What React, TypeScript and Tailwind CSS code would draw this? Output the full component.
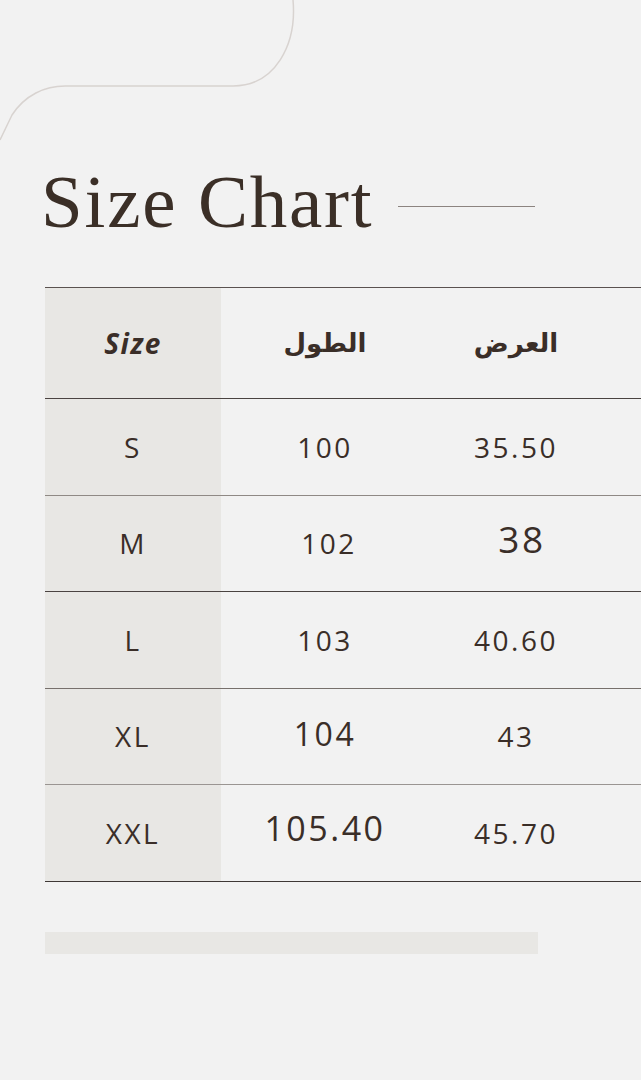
import React from "react";

type Row = {
  size: string;
  length: string;
  width: string;
  lengthCls?: string;
  widthCls?: string;
  line: string;
};

const rows: Row[] = [
  { size: "S", length: "100", width: "35.50", line: "border-[#8f8985]" },
  { size: "M", length: "102", width: "38", lengthCls: "translate-x-[4px]", widthCls: "text-[37px] -translate-y-[5px] translate-x-[6px]", line: "border-[#4a4341]" },
  { size: "L", length: "103", width: "40.60", line: "border-[#77706c]" },
  { size: "XL", length: "104", width: "43", lengthCls: "text-[32px] -translate-y-[2px]", line: "border-[#9a9592]" },
  { size: "XXL", length: "105.40", width: "45.70", lengthCls: "text-[34px] -translate-y-[4px]", line: "border-[#3f3836]" },
];

const sans = "font-['Open_Sans',sans-serif]";
const arabic = "font-['DejaVu_Sans','Noto_Sans',sans-serif]";

function Curve() {
  return (
    <svg className="absolute left-0 top-0" width="320" height="160" viewBox="0 0 320 160" fill="none">
      <path
        d="M293 0 C297 45 275 86 233 86 L65 86 C45 86 25 95 12 115 L0 140"
        stroke="#d8d3d0"
        strokeWidth="1.5"
      />
    </svg>
  );
}

export default function App() {
  return (
    <div className="relative w-[641px] h-[1080px] overflow-hidden bg-[#f2f2f2] text-[#3a2e28]">
      <Curve />

      <div className="flex items-center pt-[164px] pl-[41px]">
        <h1 className="font-['Liberation_Serif',serif] text-[75px] leading-none tracking-[1.8px] text-[#3b2f27]">
          Size Chart
        </h1>
        <div className="ml-[24px] mt-[10px] h-[1.5px] w-[137px] bg-[#8c8480]" />
      </div>

      <div className="ml-[45px] mt-[48px] border-t border-[#5a5250]">
        <div className="grid h-[111px] grid-cols-[176px_208px_174px_1fr] border-b border-[#4a4341]">
          <div className={`flex items-center justify-center bg-[#e8e7e4] ${sans} text-[28px] font-bold italic tracking-[1.5px]`}>
            Size
          </div>
          <div dir="rtl" className={`flex items-center justify-center ${arabic} text-[26px] font-bold`}>
            الطول
          </div>
          <div dir="rtl" className={`flex items-center justify-center ${arabic} text-[26px] font-bold`}>
            العرض
          </div>
          <div />
        </div>

        {rows.map((r) => (
          <div
            key={r.size}
            className={`grid h-[96.5px] grid-cols-[176px_208px_174px_1fr] border-b ${r.line} ${sans} text-[28px] tracking-[2.5px]`}
          >
            <div className="flex items-center justify-center bg-[#e8e7e4]">{r.size}</div>
            <div className="flex items-center justify-center">
              <span className={r.lengthCls}>{r.length}</span>
            </div>
            <div className="flex items-center justify-center">
              <span className={r.widthCls}>{r.width}</span>
            </div>
            <div />
          </div>
        ))}
      </div>

      <div className="ml-[45px] mt-[50px] h-[22px] w-[493px] bg-[#e8e7e4]" />
    </div>
  );
}
